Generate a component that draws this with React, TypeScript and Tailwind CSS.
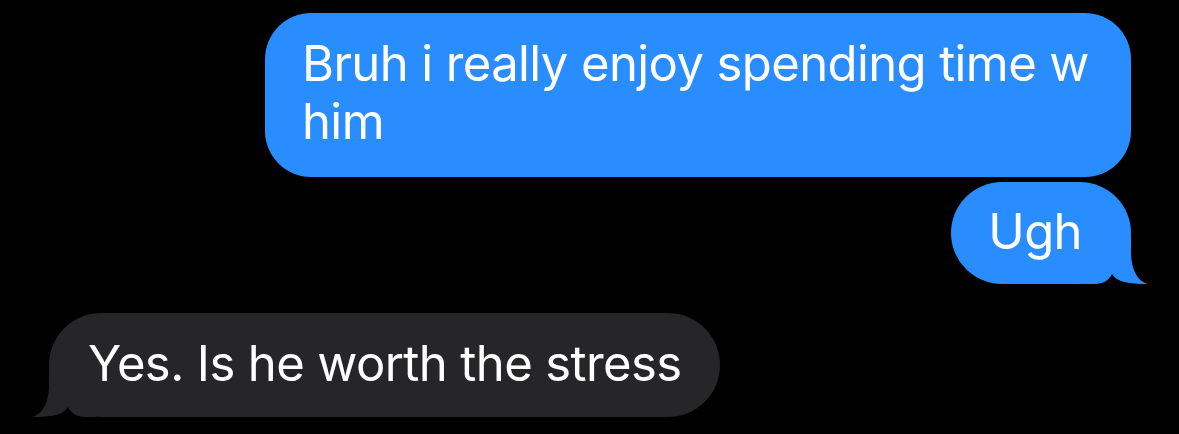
function Tail({ color, side }: { color: string; side: "left" | "right" }) {
	return (
		<svg
			width="64"
			height="48"
			viewBox="0 0 64 48"
			className={
				side === "right"
					? "absolute bottom-0 -right-[17px]"
					: "absolute bottom-0 -left-[17px] -scale-x-100"
			}
		>
			<path
				d="M0 48 L10 48 C20 48 25 44 28 38 C33 46 44 48 64 48 C56 46 48 38 47 18 L47 0 L0 0 Z"
				fill={color}
			/>
		</svg>
	);
}

export default function App() {
	return (
		<div
			className="w-[1179px] h-[434px] bg-black flex flex-col pt-[13px] px-[48px] text-white text-[49px] leading-[58px] tracking-[-0.6px] overflow-hidden"
			style={{ fontFamily: "Inter, 'Noto Sans', sans-serif" }}
		>
			<div className="flex justify-end">
				<div className="w-[866px] rounded-[46px] bg-[#2a8dff] pl-[37px] pr-[28px] pt-[22px] pb-[26px]">
					Bruh i really enjoy spending time w him
				</div>
			</div>
			<div className="flex justify-end mt-[5px]">
				<div className="relative rounded-[52px] bg-[#2a8dff] pl-[37px] pr-[49px] pt-[21px] pb-[23px]">
					<span className="relative z-10">Ugh</span>
					<Tail color="#2a8dff" side="right" />
				</div>
			</div>
			<div className="flex justify-start mt-[29px] pl-px">
				<div className="relative rounded-[52px] bg-[#262629] pl-[39px] pr-[38px] pt-[22px] pb-[24px]">
					<span className="relative z-10">Yes. Is he worth the stress</span>
					<Tail color="#262629" side="left" />
				</div>
			</div>
		</div>
	);
}
